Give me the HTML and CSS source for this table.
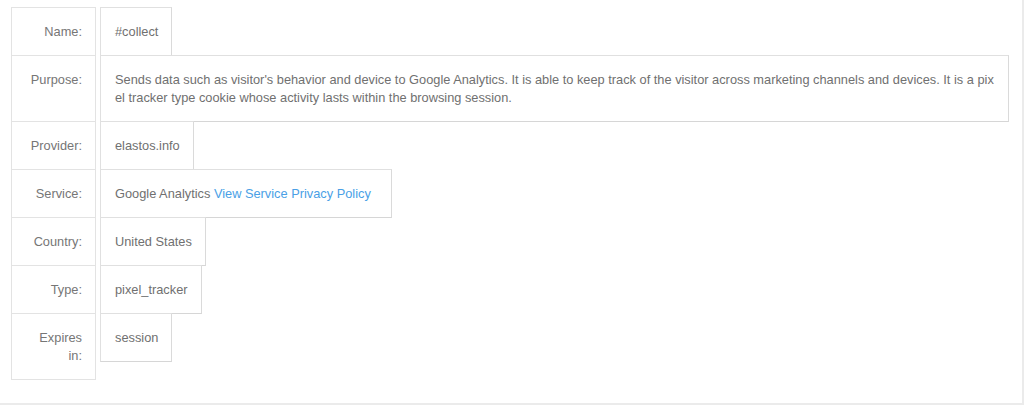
FILE: index.html
```html
<!DOCTYPE html>
<html>
<head>
<meta charset="utf-8">
<link rel="stylesheet" href="styles.css">
</head>
<body>
<div class="panel">
  <div class="details">
    <div class="row">
      <div class="label">Name:</div>
      <div class="value">#collect</div>
    </div>
    <div class="row">
      <div class="label">Purpose:</div>
      <div class="value value-wrap">Sends data such as visitor's behavior and device to Google Analytics. It is able to keep track of the visitor across marketing channels and devices. It is a pixel tracker type cookie whose activity lasts within the browsing session.</div>
    </div>
    <div class="row">
      <div class="label">Provider:</div>
      <div class="value">elastos.info</div>
    </div>
    <div class="row">
      <div class="label">Service:</div>
      <div class="value value-service">Google Analytics <a class="link" href="#">View Service Privacy Policy</a></div>
    </div>
    <div class="row">
      <div class="label">Country:</div>
      <div class="value">United States</div>
    </div>
    <div class="row">
      <div class="label">Type:</div>
      <div class="value">pixel_tracker</div>
    </div>
    <div class="row">
      <div class="label">Expires in:</div>
      <div class="value">session</div>
    </div>
  </div>
</div>
</body>
</html>
```

FILE: styles.css
```css
html, body {
  margin: 0;
  padding: 0;
  background: #ffffff;
}

.panel {
  box-sizing: border-box;
  width: 1024px;
  height: 405px;
  border-right: 2px solid #ebebeb;
  border-bottom: 2px solid #ebebeb;
  padding: 7px 0 0 11px;
  font-family: "Liberation Sans", Arial, sans-serif;
  font-size: 12.8px;
  line-height: 18px;
  color: #707070;
}

.details {
  width: 998px;
}

.row {
  display: flex;
  align-items: stretch;
  gap: 4px;
  margin-top: -1px;
}

.row:first-child {
  margin-top: 0;
}

.label {
  flex: 0 0 auto;
  box-sizing: border-box;
  width: 85px;
  padding: 15px 13px 14px 15px;
  border: 1px solid #e3e3e3;
  text-align: right;
  color: #767676;
}

.value {
  flex: 0 1 auto;
  align-self: flex-start;
  padding: 15px 13px 14px 14px;
  border: 1px solid #e0e0e0;
  border-bottom-color: #d6d6d6;
  border-right-color: #dadada;
  background: #ffffff;
}

.value-wrap {
  word-break: break-all;
}

.value-service {
  padding-right: 20px;
}

.link {
  color: #4a9fe6;
  text-decoration: none;
}
```
